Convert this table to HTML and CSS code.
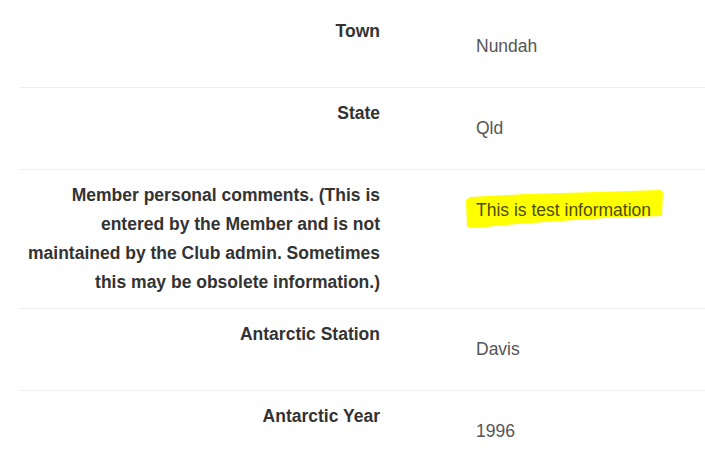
FILE: index.html
```html
<!DOCTYPE html>
<html>
<head>
<meta charset="utf-8">
<link rel="stylesheet" href="styles.css">
</head>
<body>
<div class="details">
  <div class="row">
    <div class="label">Town</div>
    <div class="value">Nundah</div>
  </div>
  <div class="row">
    <div class="label">State</div>
    <div class="value">Qld</div>
  </div>
  <div class="row">
    <div class="label">Member personal comments. (This is entered by the Member and is not maintained by the Club admin. Sometimes this may be obsolete information.)</div>
    <div class="value"><span class="marked"><svg class="brush" width="200" height="40" viewBox="0 0 200 40"><polygon points="4,7 60,4 130,2 194,0 197,2 196,26 140,28 80,32 40,35 9,38 1,37 0,10" fill="#ffff00"/></svg><span class="marked-text">This is test information</span></span></div>
  </div>
  <div class="row">
    <div class="label">Antarctic Station</div>
    <div class="value">Davis</div>
  </div>
  <div class="row">
    <div class="label">Antarctic Year</div>
    <div class="value">1996</div>
  </div>
</div>
</body>
</html>
```
FILE: styles.css
```css
html, body {
  margin: 0;
  padding: 0;
  background: #ffffff;
}
body {
  font-family: "Liberation Sans", Arial, sans-serif;
  font-size: 17.5px;
  line-height: 29px;
}
.details {
  padding: 6px 0 0 20px;
}
.row {
  display: flex;
  padding: 11px 0 11px 0;
  border-bottom: 1px solid #eeeeee;
}
.label {
  width: 360px;
  flex: none;
  text-align: right;
  font-weight: bold;
  color: #333333;
}
.value {
  margin-left: 96px;
  padding: 15px 0 15px 0;
  color: #555555;
}
.marked {
  position: relative;
  display: inline-block;
}
.brush {
  position: absolute;
  left: -10px;
  top: -6px;
  z-index: 0;
}
.marked-text {
  position: relative;
  z-index: 1;
  color: #4d4d00;
}
```
